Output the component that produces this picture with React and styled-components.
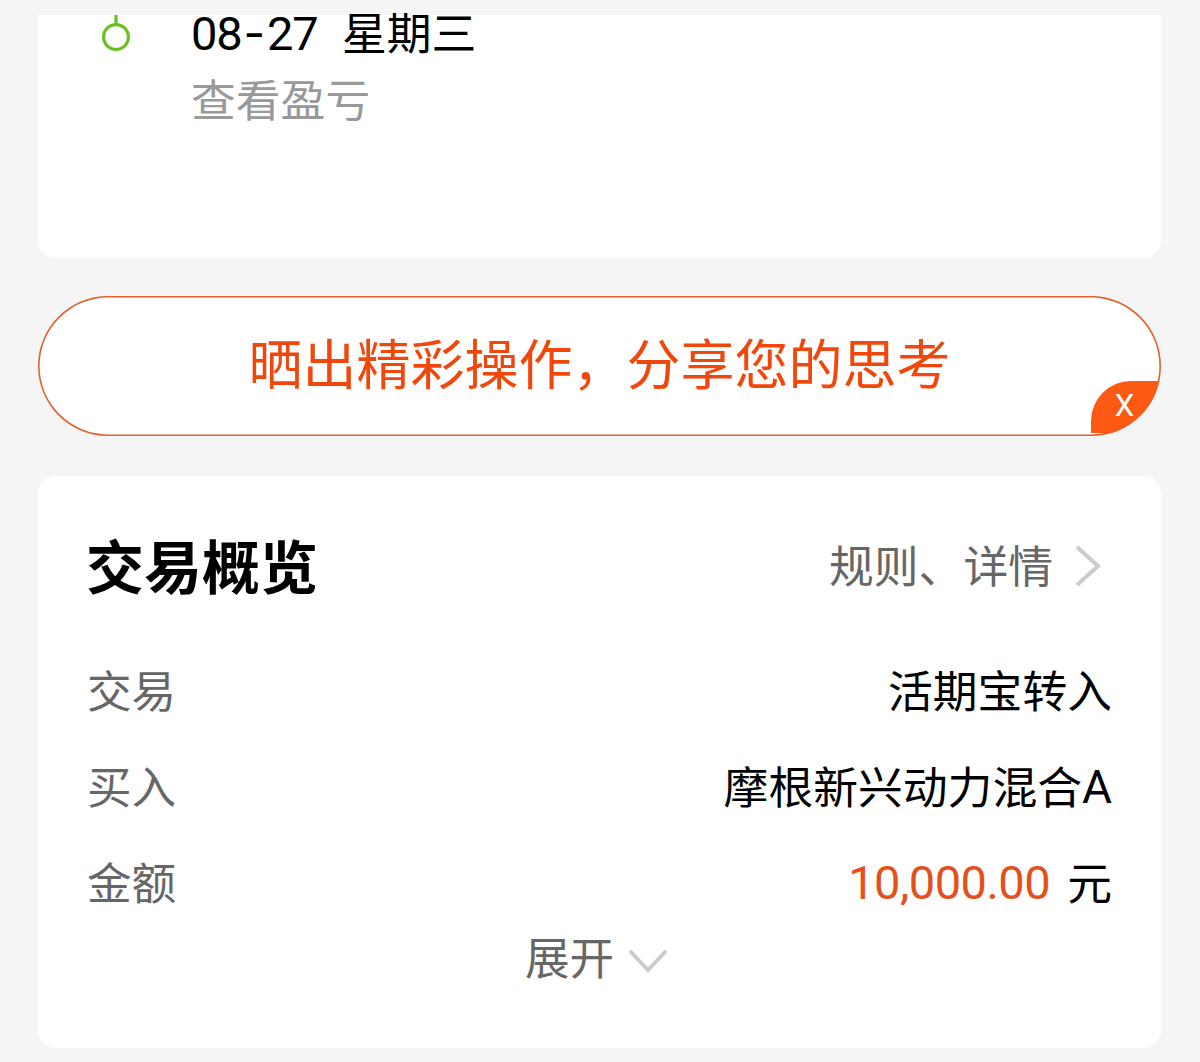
import React from "react";
import styled, { createGlobalStyle } from "styled-components";

const GlobalStyle = createGlobalStyle`
  * { box-sizing: border-box; }
  body {
    margin: 0;
    background: #f5f5f5;
    font-family: Roboto, "Noto Sans CJK SC", sans-serif;
    color: #000;
  }
`;

const Page = styled.main`
  width: 1200px;
  height: 1062px;
  padding: 15px 39px 0 38px;
  overflow: hidden;
`;

const TimelineCard = styled.section`
  height: 243px;
  padding-left: 64px;
  display: flex;
  background: #fff;
  border-radius: 0 0 18px 18px;
`;

const Marker = styled.svg`
  width: 28px;
  height: 40px;
  flex: none;
  margin-right: 61px;
`;

const Entry = styled.div`
  display: flex;
  flex-direction: column;
`;

const DateLine = styled.div`
  display: flex;
  align-items: center;
  height: 40px;
  margin-bottom: 9px;
  line-height: 40px;
  white-space: nowrap;
  font-family: "Noto Sans CJK SC", sans-serif;
  font-size: 44.8px;
`;

const Weekday = styled.span`
  margin-top: -9px;
`;

const Digits = styled.span`
  font-family: Roboto, sans-serif;
  font-size: 47px;
  width: 126px;
  margin: -4px 25px 0 0;
  letter-spacing: -1.2px;
`;

const Dash = styled.span`
  margin-left: 2px;
  font-family: Inter, sans-serif;
  letter-spacing: 2px;
`;

const Note = styled.div`
  height: 68px;
  line-height: 68px;
  font-family: "Noto Sans CJK SC", sans-serif;
  font-size: 44.8px;
  color: #999;
`;

const ShareBanner = styled.div`
  position: relative;
  height: 140px;
  margin: 38px 0 40px;
  padding-bottom: 8px;
  display: flex;
  align-items: center;
  justify-content: center;
  box-shadow: inset 0 0 0 1.6px #e2602c;
  border-radius: 70px;
  background: #fff;
  overflow: hidden;
  font-family: "Noto Sans CJK SC", sans-serif;
  font-size: 54px;
  line-height: 80px;
  color: #f0480c;
  white-space: nowrap;
`;

const CloseTag = styled.button`
  position: absolute;
  right: 1px;
  bottom: 3px;
  width: 69px;
  height: 52px;
  padding: 0 2px 2px 0;
  border: 0;
  border-radius: 40px 0 0 0;
  background: #fc5912;
  color: #fff;
  font: 400 31px/50px Roboto, sans-serif;
`;

const OverviewCard = styled.section`
  height: 572px;
  padding: 42px 49px 0 49px;
  background: #fff;
  border-radius: 18px;
`;

const Header = styled.header`
  height: 96px;
  display: flex;
  align-items: center;
  justify-content: space-between;
`;

const Title = styled.h2`
  margin: -4px 0 0 -1px;
  font: 700 58px/90px "Noto Sans CJK SC", sans-serif;
`;

const Link = styled.a`
  display: flex;
  align-items: center;
  margin-right: 10px;
  font: 400 44.8px/68px "Noto Sans CJK SC", sans-serif;
  color: #666;
`;

const LinkText = styled.span`
  margin-top: -4px;
`;

const Chevron = styled.svg`
  flex: none;
  width: ${(p) => p.$w}px;
  height: ${(p) => p.$h}px;
  margin-left: ${(p) => p.$gap}px;
  fill: none;
  stroke: #ccc;
  stroke-width: 4;
`;

const Rows = styled.div`
  padding-top: 27px;
`;

const Row = styled.div`
  height: 96px;
  display: flex;
  align-items: center;
  justify-content: space-between;
  font: 400 44.8px/68px "Noto Sans CJK SC", sans-serif;
`;

const Label = styled.span`
  font-size: 44.6px;
  color: #666;
`;

const Value = styled.span`
  display: flex;
  align-items: center;
`;

const Amount = styled.span`
  margin: 4px 17px 0 0;
  font-family: Roboto, sans-serif;
  font-size: 47px;
  letter-spacing: -0.5px;
  color: #e5501a;
`;

const Latin = styled.span`
  margin-top: 4px;
  font-family: Roboto, sans-serif;
  font-size: 46px;
`;

const Expand = styled.div`
  height: 68px;
  margin-top: -7px;
  padding-right: 6px;
  display: flex;
  align-items: center;
  justify-content: center;
  font: 400 44.6px/68px "Noto Sans CJK SC", sans-serif;
  color: #666;

  svg {
    margin-top: 9px;
  }
`;

export default function App() {
  return (
    <Page>
      <GlobalStyle />
      <TimelineCard>
        <Marker viewBox="0 0 28 40" fill="none" stroke="#69c11f" strokeWidth="3.2">
          <path d="M14 0V9" />
          <circle cx="14" cy="22" r="12.4" />
        </Marker>
        <Entry>
          <DateLine>
            <Digits>08<Dash>-</Dash>27</Digits>
            <Weekday>星期三</Weekday>
          </DateLine>
          <Note>查看盈亏</Note>
        </Entry>
      </TimelineCard>

      <ShareBanner>
        <span>晒出精彩操作，分享您的思考</span>
        <CloseTag>X</CloseTag>
      </ShareBanner>

      <OverviewCard>
        <Header>
          <Title>交易概览</Title>
          <Link>
            <LinkText>规则、详情</LinkText>
            <Chevron $w={28} $h={44} $gap={21} viewBox="0 0 28 44">
              <path d="M3 3L24 22L3 41" />
            </Chevron>
          </Link>
        </Header>
        <Rows>
          <Row>
            <Label>交易</Label>
            <Value>活期宝转入</Value>
          </Row>
          <Row>
            <Label>买入</Label>
            <Value>摩根新兴动力混合<Latin>A</Latin></Value>
          </Row>
          <Row>
            <Label>金额</Label>
            <Value><Amount>10,000.00</Amount>元</Value>
          </Row>
        </Rows>
        <Expand>
          展开
          <Chevron $w={40} $h={28} $gap={14} viewBox="0 0 40 28" strokeLinecap="round">
            <path d="M3 5L20 23L37 5" />
          </Chevron>
        </Expand>
      </OverviewCard>
    </Page>
  );
}
